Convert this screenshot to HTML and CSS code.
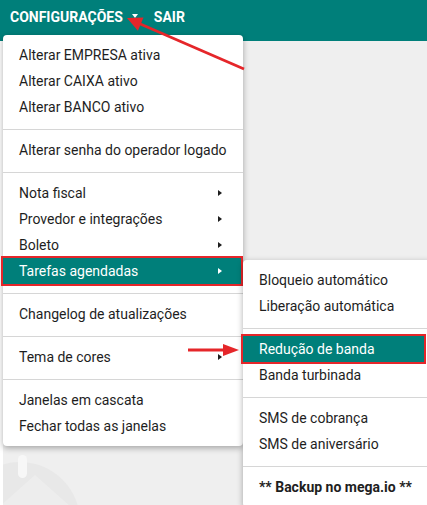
FILE: index.html
```html
<!DOCTYPE html>
<html lang="pt-BR">
<head>
<meta charset="utf-8">
<title>Configurações</title>
<link rel="stylesheet" href="styles.css">
</head>
<body>
<header class="topbar">
  <nav class="topnav">
    <span class="topnav-item">CONFIGURAÇÕES<span class="caret"></span></span>
    <span class="topnav-item">SAIR</span>
  </nav>
</header>
<main class="desk">
  <svg class="watermark" width="100" height="70" viewBox="0 0 100 70">
    <circle cx="20" cy="77" r="60" fill="#e8e8e8"/>
    <path d="M -10 70 L 35 30 L 80 70 Z" fill="#ededed"/>
    <rect x="18" y="10" width="9" height="23" rx="4.5" fill="#f7f7f7"/>
  </svg>
</main>

<div class="menu main-menu">
  <ul class="menu-list">
    <li class="menu-item">Alterar EMPRESA ativa</li>
    <li class="menu-item">Alterar CAIXA ativo</li>
    <li class="menu-item">Alterar BANCO ativo</li>
    <li class="menu-sep"></li>
    <li class="menu-item">Alterar senha do operador logado</li>
    <li class="menu-sep"></li>
    <li class="menu-item has-sub">Nota fiscal<span class="tri"></span></li>
    <li class="menu-item has-sub">Provedor e integrações<span class="tri"></span></li>
    <li class="menu-item has-sub">Boleto<span class="tri"></span></li>
    <li class="menu-item has-sub active marked">Tarefas agendadas<span class="tri"></span></li>
    <li class="menu-sep"></li>
    <li class="menu-item">Changelog de atualizações</li>
    <li class="menu-sep"></li>
    <li class="menu-item has-sub">Tema de cores<span class="tri"></span></li>
    <li class="menu-sep"></li>
    <li class="menu-item">Janelas em cascata</li>
    <li class="menu-item">Fechar todas as janelas</li>
  </ul>
</div>

<div class="menu sub-menu">
  <ul class="menu-list">
    <li class="menu-item">Bloqueio automático</li>
    <li class="menu-item">Liberação automática</li>
    <li class="menu-sep"></li>
    <li class="menu-item active marked sub-marked">Redução de banda</li>
    <li class="menu-item">Banda turbinada</li>
    <li class="menu-sep"></li>
    <li class="menu-item">SMS de cobrança</li>
    <li class="menu-item">SMS de aniversário</li>
    <li class="menu-sep"></li>
    <li class="menu-item bold">** Backup no mega.io **</li>
  </ul>
</div>

<svg class="annotations" width="427" height="505" viewBox="0 0 427 505">
  <line x1="244" y1="69" x2="138" y2="23" stroke="#e5262a" stroke-width="2.8"/>
  <polygon points="127,18 143.5,17.5 137.9,30.7" fill="#e5262a"/>
  <line x1="188" y1="350" x2="226" y2="350" stroke="#e5262a" stroke-width="2.8"/>
  <polygon points="239,350 223,344 223,356" fill="#e5262a"/>
</svg>
</body>
</html>
```

FILE: styles.css
```css
html, body {
  margin: 0;
  padding: 0;
  overflow: hidden;
}
body {
  width: 427px;
  height: 505px;
  background: #ffffff;
  font-family: Roboto, "Liberation Sans", sans-serif;
  position: relative;
}
.topbar {
  height: 41px;
  background: #007f7a;
  display: flex;
  align-items: center;
}
.topnav {
  display: flex;
  align-items: center;
  gap: 16px;
  padding-left: 10px;
  margin-top: -7px;
}
.topnav-item {
  color: #ffffff;
  font-weight: 700;
  font-size: 14px;
  display: flex;
  align-items: center;
}
.caret {
  display: inline-block;
  width: 0;
  height: 0;
  border-left: 3.5px solid transparent;
  border-right: 3.5px solid transparent;
  border-top: 4px solid #ffffff;
  margin-left: 9px;
  margin-top: -2px;
}
.desk {
  height: 464px;
  margin-left: 3px;
  background: #efefef;
  position: relative;
  overflow: hidden;
}
.watermark {
  position: absolute;
  left: -3px;
  top: 404px;
}
.menu {
  position: absolute;
  background: #ffffff;
  border-radius: 4px;
  box-shadow: 0 2px 6px rgba(0, 0, 0, 0.32);
}
.main-menu {
  left: 3px;
  top: 35px;
  width: 240px;
}
.sub-menu {
  left: 243px;
  top: 260px;
  width: 190px;
}
.menu-list {
  list-style: none;
  margin: 0;
  padding: 7px 0;
}
.menu-item {
  height: 26px;
  line-height: 26px;
  padding-left: 16px;
  font-size: 14px;
  color: #1e1e1e;
  display: flex;
  align-items: center;
  justify-content: space-between;
  white-space: nowrap;
}
.has-sub {
  padding-right: 21px;
}
.tri {
  width: 0;
  height: 0;
  border-top: 3.5px solid transparent;
  border-bottom: 3.5px solid transparent;
  border-left: 4px solid #1e1e1e;
}
.active {
  background: #007f7a;
  color: #ffffff;
}
.active .tri {
  border-left-color: #ffffff;
}
.marked {
  outline: 2px solid #e5262a;
  margin-right: 2px;
}
.main-menu .marked {
  padding-right: 19px;
}
.sub-marked {
  margin-right: 9px;
}
.bold {
  font-weight: 700;
}
.menu-sep {
  height: 1px;
  background: #d6d6d6;
  margin: 9px 0 7px;
}
.annotations {
  position: absolute;
  left: 0;
  top: 0;
  pointer-events: none;
}
```
